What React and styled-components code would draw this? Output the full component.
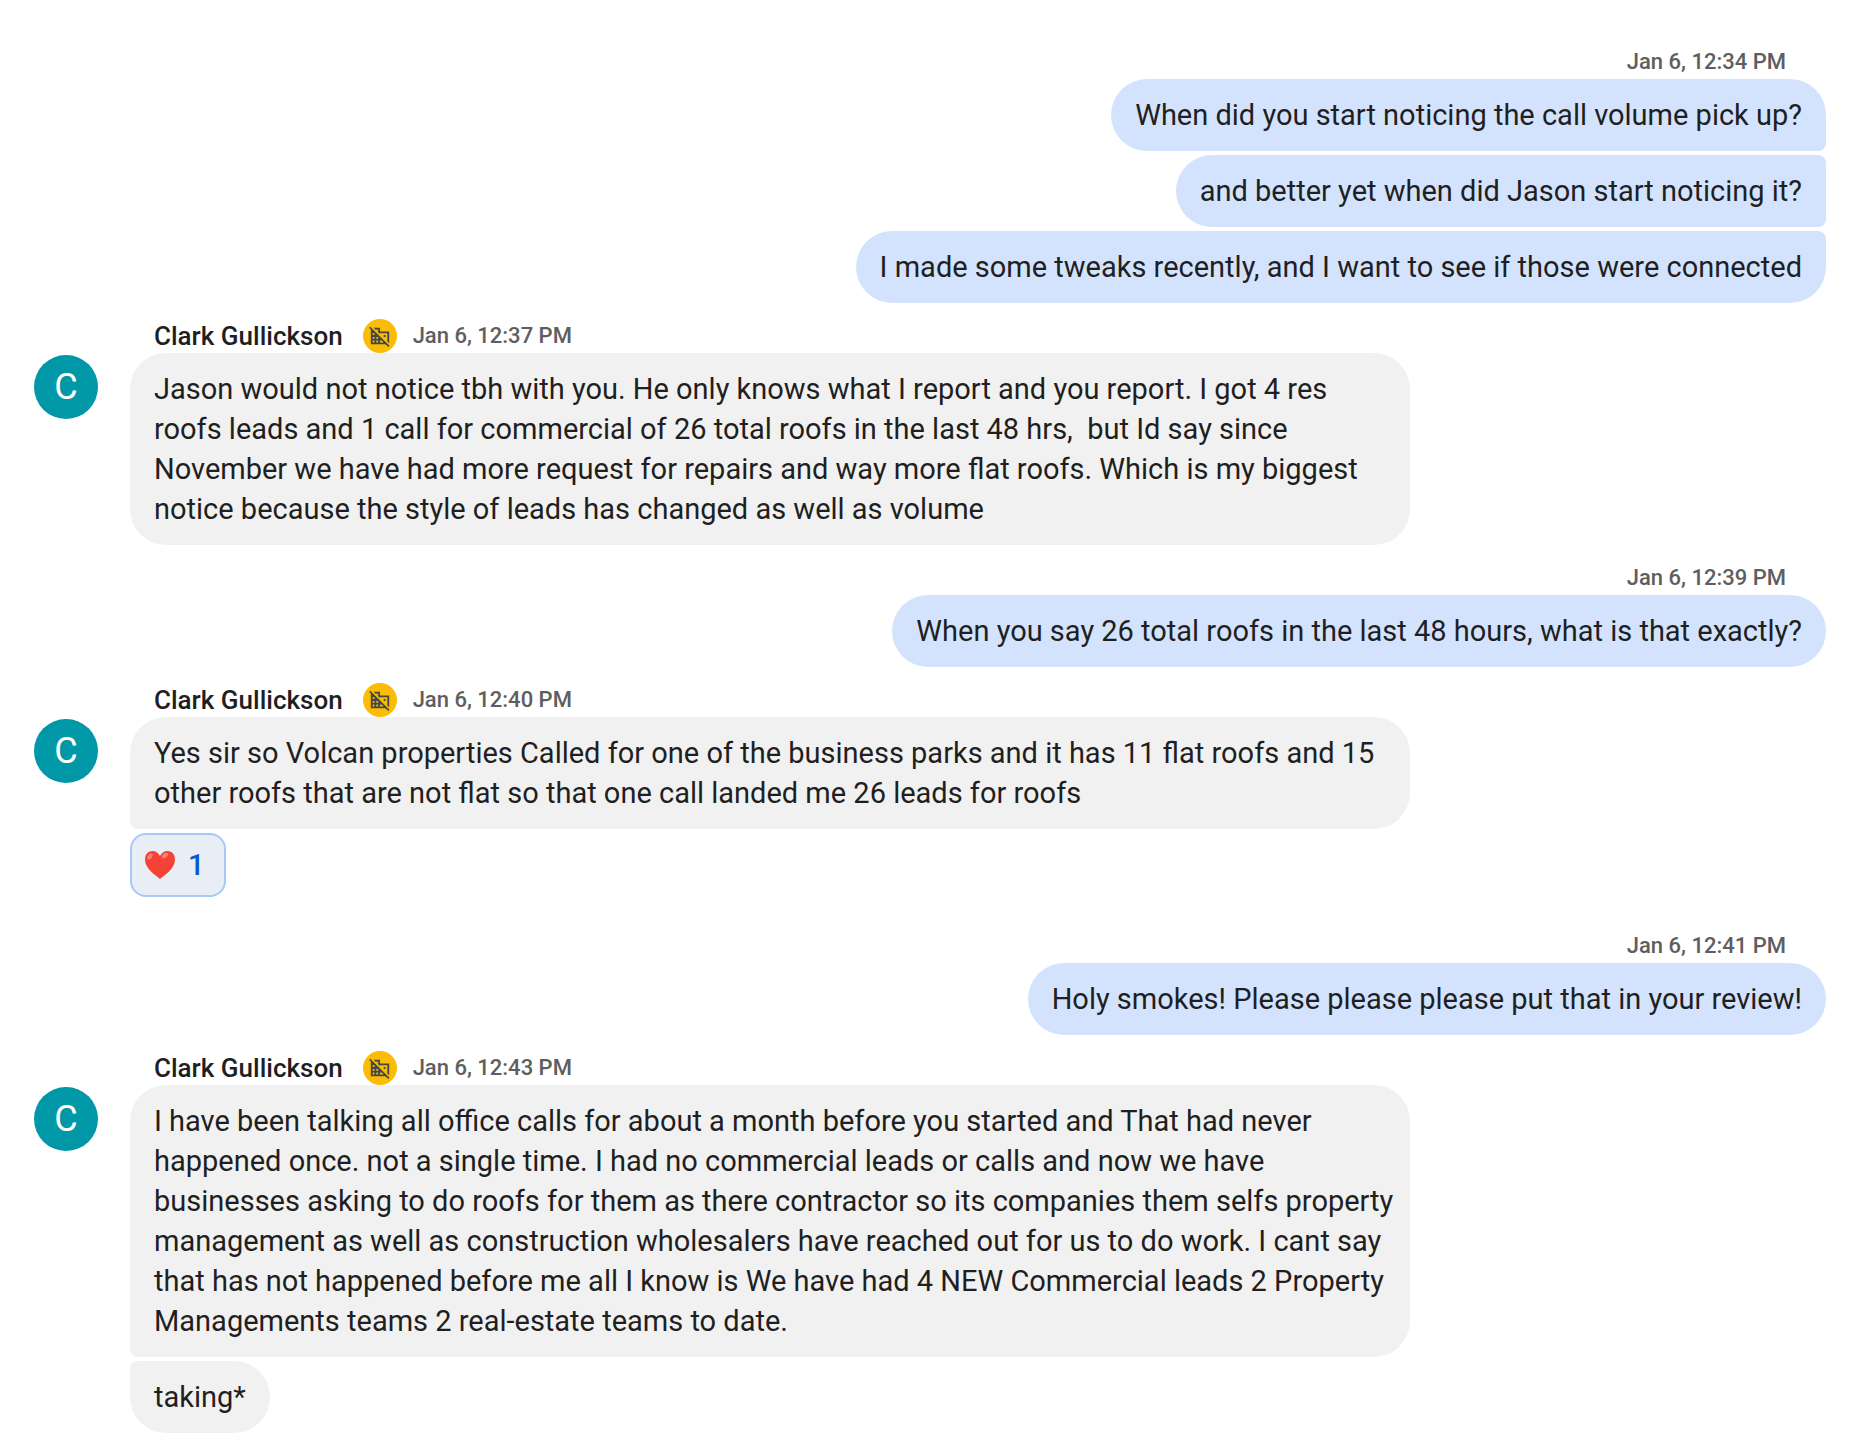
import React from 'react';
import styled, { createGlobalStyle } from 'styled-components';
import { MdDomainDisabled } from 'react-icons/md';

const GlobalStyle = createGlobalStyle`
  * {
    box-sizing: border-box;
  }

  body {
    margin: 0;
    background: #fff;
    color: #1f1f1f;
    font-family: Roboto, 'Liberation Sans', sans-serif;
  }
`;

const Chat = styled.main`
  display: flex;
  flex-direction: column;
  padding: 29px 48px 13px 34px;
`;

const Group = styled.section`
  display: flex;
  align-items: flex-start;
  justify-content: ${({ $own }) => ($own ? 'flex-end' : 'flex-start')};
  gap: 32px;
`;

const Avatar = styled.div`
  display: flex;
  align-items: center;
  justify-content: center;
  flex: none;
  width: 64px;
  height: 64px;
  margin-top: 52px;
  border-radius: 50%;
  background: #0097a7;
  color: #fff;
  font-size: 36px;
`;

const Messages = styled.div`
  display: flex;
  flex-direction: column;
  align-items: ${({ $own }) => ($own ? 'flex-end' : 'flex-start')};
  gap: 4px;
  min-width: 0;
  max-width: ${({ $own }) => ($own ? 'none' : '1280px')};
`;

const Header = styled.header`
  display: flex;
  align-items: center;
  height: 46px;
  padding: 20px ${({ $own }) => ($own ? '40px' : '24px')} 0;
`;

const Name = styled.h2`
  margin: 0 20px 0 0;
  font-size: 26px;
  line-height: 32px;
  font-weight: 500;
`;

const Badge = styled.span`
  display: flex;
  align-items: center;
  justify-content: center;
  flex: none;
  width: 34px;
  height: 34px;
  margin-right: 16px;
  border-radius: 50%;
  background: #fbbc04;
  color: #444746;
`;

const Time = styled.time`
  color: #5e5e5e;
  font-size: 22px;
  line-height: 32px;
  font-weight: 500;
`;

const Bubble = styled.p`
  margin: 0;
  padding: 16px ${({ $long }) => ($long ? '12px' : '24px')} 16px 24px;
  border-radius: ${({ $radius }) => $radius};
  background: ${({ $own }) => ($own ? '#d3e3fd' : '#f1f1f1')};
  font-size: 29px;
  line-height: 40px;
  white-space: pre-wrap;
`;

const Reaction = styled.button`
  display: flex;
  align-items: center;
  gap: 12px;
  width: 96px;
  height: 64px;
  margin-bottom: 16px;
  padding: 0 12px;
  border: 2px solid #a8c7fa;
  border-radius: 16px;
  background: #e9eef6;
  color: #0b57d0;
  font: inherit;
  font-size: 29px;
  font-weight: 500;
  cursor: pointer;
`;

const Heart = () => (
  <svg width="32" height="32" viewBox="0 0 32 32" aria-hidden="true">
    <path
      d="M16 30C12 26.500 1 20 1 10.500C1 5.500 4 2 8.500 2C12 2 14.500 4 16 7C17.500 4 20 2 23.500 2C28 2 31 5.500 31 10.500C31 20 20 26.500 16 30Z"
      fill="#f44336"
    />
    <ellipse cx="6" cy="7.500" rx="2" ry="3.500" transform="rotate(38 6 7.500)" fill="#ff7e73" />
    <ellipse cx="21" cy="6.500" rx="2" ry="3.500" transform="rotate(50 21 6.500)" fill="#ff7e73" />
  </svg>
);

// the corners between stacked bubbles on the sender's side are tightened
const getRadius = (own, joinTop, joinBottom) => {
  const top = joinTop ? '8px' : '36px';
  const bottom = joinBottom ? '8px' : '36px';
  return own ? `36px ${top} ${bottom} 36px` : `${top} 36px 36px ${bottom}`;
};

const groups = [
  {
    own: true,
    time: 'Jan 6, 12:34 PM',
    messages: [
      'When did you start noticing the call volume pick up?',
      'and better yet when did Jason start noticing it?',
      'I made some tweaks recently, and I want to see if those were connected',
    ],
  },
  {
    name: 'Clark Gullickson',
    time: 'Jan 6, 12:37 PM',
    messages: [
      'Jason would not notice tbh with you. He only knows what I report and you report. I got 4 res roofs leads and 1 call for commercial of 26 total roofs in the last 48 hrs,  but Id say since November we have had more request for repairs and way more flat roofs. Which is my biggest notice because the style of leads has changed as well as volume',
    ],
  },
  {
    own: true,
    time: 'Jan 6, 12:39 PM',
    messages: ['When you say 26 total roofs in the last 48 hours, what is that exactly?'],
  },
  {
    name: 'Clark Gullickson',
    time: 'Jan 6, 12:40 PM',
    messages: [
      'Yes sir so Volcan properties Called for one of the business parks and it has 11 flat roofs and 15 other roofs that are not flat so that one call landed me 26 leads for roofs',
    ],
    hearts: 1,
  },
  {
    own: true,
    time: 'Jan 6, 12:41 PM',
    messages: ['Holy smokes! Please please please put that in your review!'],
  },
  {
    name: 'Clark Gullickson',
    time: 'Jan 6, 12:43 PM',
    messages: [
      'I have been talking all office calls for about a month before you started and That had never happened once. not a single time. I had no commercial leads or calls and now we have businesses asking to do roofs for them as there contractor so its companies them selfs property management as well as construction wholesalers have reached out for us to do work. I cant say that has not happened before me all I know is We have had 4 NEW Commercial leads 2 Property Managements teams 2 real-estate teams to date.',
      'taking*',
    ],
  },
];

const MessageGroup = ({ own, name, time, messages, hearts }) => (
  <Group $own={own}>
    {!own && <Avatar>{name[0]}</Avatar>}
    <Messages $own={own}>
      <Header $own={own}>
        {name && (
          <>
            <Name>{name}</Name>
            <Badge>
              <MdDomainDisabled size={22} />
            </Badge>
          </>
        )}
        <Time>{time}</Time>
      </Header>
      {messages.map((text, i) => (
        <Bubble
          key={text}
          $own={own}
          $long={text.length > 100}
          $radius={getRadius(own, i > 0, i < messages.length - 1 || hearts)}
        >
          {text}
        </Bubble>
      ))}
      {hearts && (
        <Reaction type="button">
          <Heart />
          {hearts}
        </Reaction>
      )}
    </Messages>
  </Group>
);

const App = () => (
  <>
    <GlobalStyle />
    <Chat>
      {groups.map((group) => (
        <MessageGroup key={group.time} {...group} />
      ))}
    </Chat>
  </>
);

export default App;
